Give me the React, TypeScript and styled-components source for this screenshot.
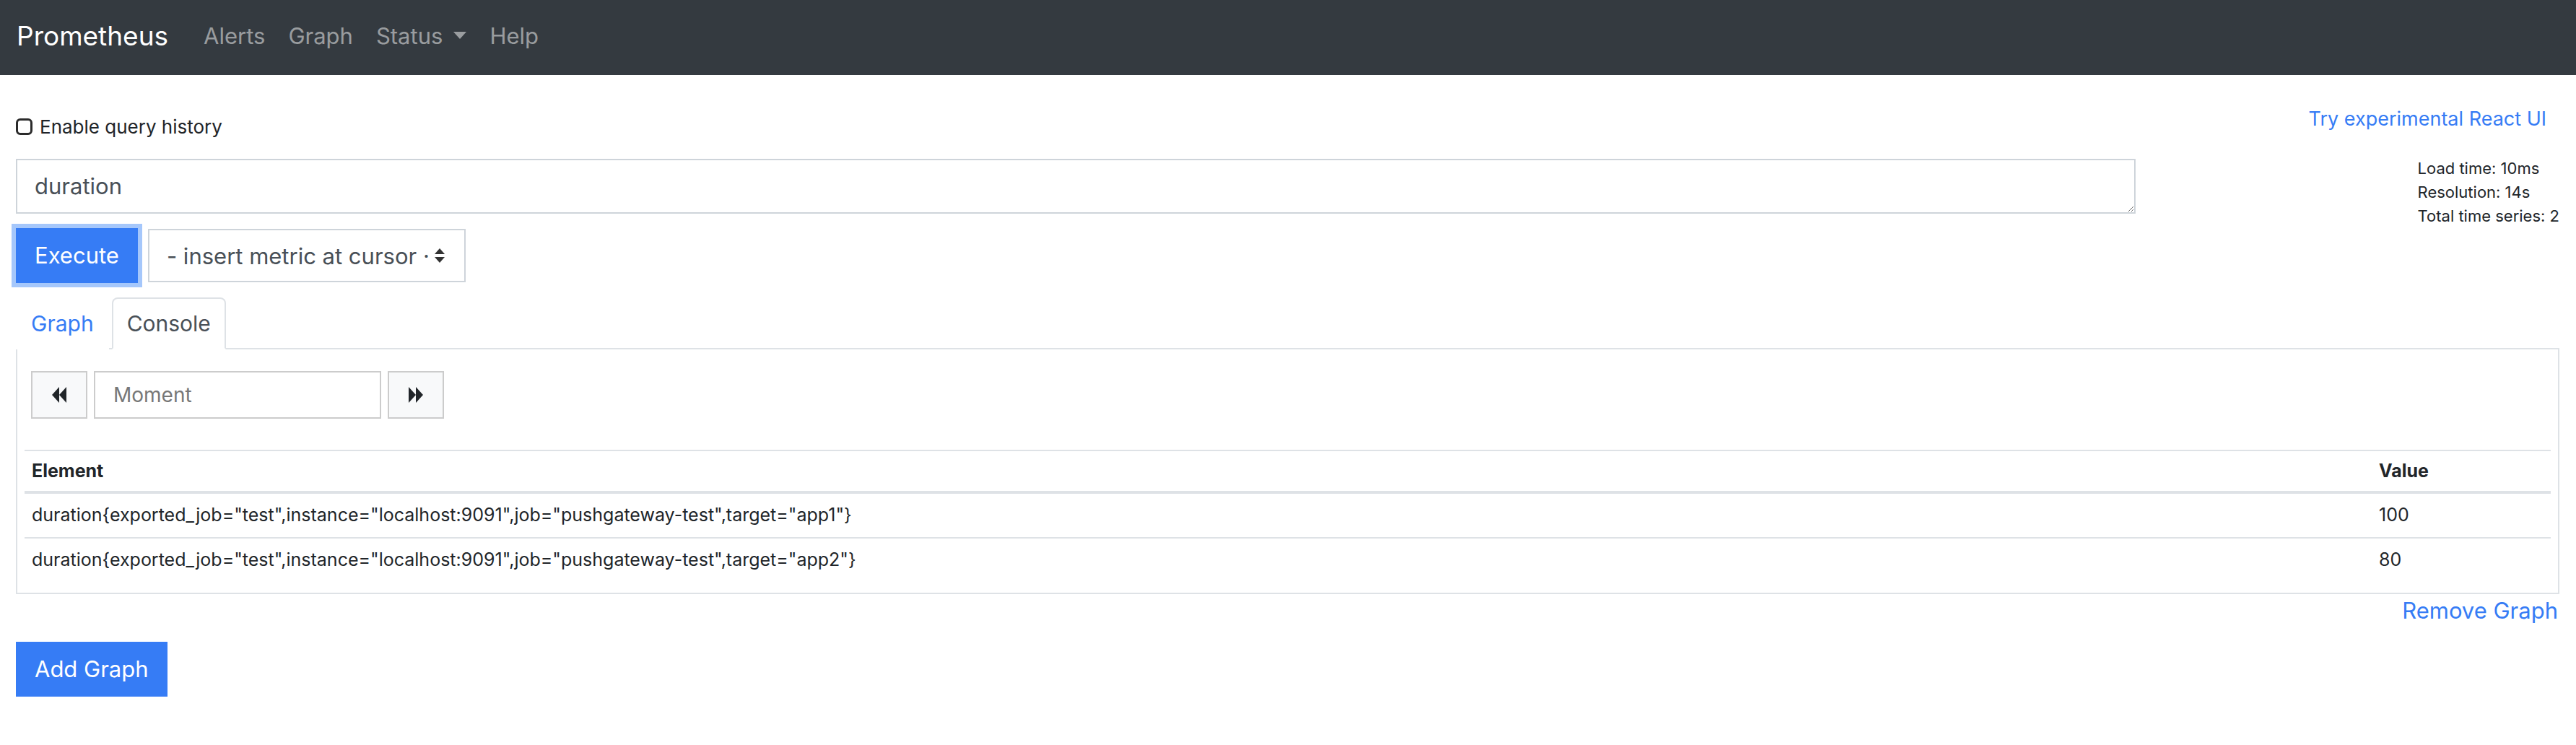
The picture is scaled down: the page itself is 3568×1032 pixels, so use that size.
import React from 'react';
import styled, { createGlobalStyle } from 'styled-components';

const BLUE = '#367cf5';

const GlobalStyle = createGlobalStyle`
  * { box-sizing: border-box; }
  body {
    margin: 0;
    background: #fff;
    font-family: Inter, "Liberation Sans", sans-serif;
    color: #212529;
  }
`;

const Navbar = styled.nav`
  height: 104px;
  background: #343a40;
  display: flex;
  align-items: center;
  padding: 0 32px 6px 23px;
`;

const Brand = styled.a`
  font-size: 37px;
  color: #fff;
  margin-right: 33px;
  text-decoration: none;
`;

const NavLink = styled.a`
  display: flex;
  align-items: center;
  padding: 0 16px;
  font-size: 31px;
  color: rgba(255, 255, 255, 0.5);
  text-decoration: none;
`;

const Caret = styled.span`
  display: inline-block;
  margin-left: 15px;
  border-top: 10px solid rgba(255, 255, 255, 0.5);
  border-left: 9px solid transparent;
  border-right: 9px solid transparent;
`;

const Page = styled.div`
  padding: 0 23px 40px 22px;
`;

const TopRow = styled.div`
  display: flex;
  justify-content: space-between;
  align-items: flex-start;
  padding-top: 41px;
`;

const HistoryLabel = styled.label`
  display: flex;
  align-items: center;
  gap: 10px;
  margin-top: 11px;
  font-size: 26px;
  line-height: 39px;
`;

const CheckBox = styled.span`
  width: 23px;
  height: 23px;
  border: 3px solid #2b2b2b;
  border-radius: 6px;
`;

const TextLink = styled.a`
  font-size: ${p => p.$size || 31}px;
  line-height: ${p => (p.$size || 31) * 1.5}px;
  color: ${BLUE};
  text-decoration: none;
`;

const QueryGrid = styled.div`
  display: grid;
  grid-template-columns: 10fr 2fr;
  margin-top: 25px;
`;

const QueryInput = styled.textarea`
  display: block;
  width: 100%;
  height: 76px;
  padding: 12px 24px;
  border: 2px solid #ced4da;
  border-radius: 0;
  font-family: Inter, "Liberation Sans", sans-serif;
  font-size: 31px;
  line-height: 48px;
  color: #495057;
  resize: vertical;
  outline: none;
`;

const ExecuteRow = styled.div`
  display: flex;
  align-items: center;
  gap: 14px;
  margin-top: 20px;
`;

const Button = styled.button`
  height: 76px;
  padding: 0 24px;
  background: ${BLUE};
  border: 2px solid ${BLUE};
  border-radius: 0;
  color: #fff;
  font-family: Inter, "Liberation Sans", sans-serif;
  font-size: 31px;
  line-height: 48px;
  box-shadow: ${p => (p.$focused ? '0 0 0 6px #a5c7fb' : 'none')};
`;

const MetricSelect = styled.div`
  width: 440px;
  height: 74px;
  display: flex;
  align-items: center;
  justify-content: space-between;
  padding: 0 27px 0 24px;
  border: 2px solid #ced4da;
  font-size: 31px;
  color: #495057;
  white-space: nowrap;
`;

const Stats = styled.div`
  justify-self: end;
  margin-top: -3px;
  font-size: 22px;
  line-height: 33px;
`;

const TabList = styled.div`
  display: flex;
  gap: 4px;
  margin-top: 20px;
  margin-bottom: -2px;
  position: relative;
`;

const Tab = styled.a`
  padding: 10px 19px;
  font-size: 30px;
  line-height: 48px;
  text-decoration: none;
  border: 2px solid ${p => (p.$active ? '#dee2e6' : 'transparent')};
  border-bottom-color: ${p => (p.$active ? '#fff' : 'transparent')};
  border-radius: 8px 8px 0 0;
  background: #fff;
  color: ${p => (p.$active ? '#495057' : BLUE)};
`;

const Panel = styled.div`
  border: 2px solid #dee2e6;
  padding: 10px;
`;

const MomentRow = styled.div`
  display: flex;
  gap: 9px;
  margin: 20px 0 0 9px;
`;

const StepButton = styled.div`
  width: 78px;
  height: 66px;
  display: flex;
  align-items: center;
  justify-content: center;
  background: #f8f9fa;
  border: 2px solid #ccc;
`;

const MomentInput = styled.input`
  width: 398px;
  height: 66px;
  padding: 0 25px;
  border: 2px solid #ccc;
  font-family: Inter, "Liberation Sans", sans-serif;
  font-size: 28px;
  color: #495057;
  outline: none;
  &::placeholder { color: #777; }
`;

const Table = styled.table`
  width: 100%;
  margin: 43px 0 5px;
  border-collapse: collapse;
  font-size: 25px;
  line-height: 39px;
`;

const Th = styled.th`
  text-align: left;
  font-weight: 700;
  padding: 8px 10px;
  border-top: 2px solid #dee2e6;
  border-bottom: 4px solid #dee2e6;
  width: ${p => p.$width || 'auto'};
`;

const Td = styled.td`
  padding: 10px 10px 11px;
  border-top: 2px solid #dee2e6;
`;

const RemoveRow = styled.div`
  display: flex;
  justify-content: flex-end;
  padding-right: 2px;
`;

const AddRow = styled.div`
  margin-top: 19px;
`;

const Rewind = () => (
  <svg width="20" height="22" viewBox="0 0 20 22">
    <polygon points="10,0 0,11 10,22" fill="#212529" />
    <polygon points="20,0 10,11 20,22" fill="#212529" />
  </svg>
);

const Forward = () => (
  <svg width="20" height="22" viewBox="0 0 20 22">
    <polygon points="0,0 10,11 0,22" fill="#212529" />
    <polygon points="10,0 20,11 10,22" fill="#212529" />
  </svg>
);

const UpDown = () => (
  <svg width="14" height="20" viewBox="0 0 14 20">
    <polygon points="7,0 14,8 0,8" fill="#333" />
    <polygon points="0,12 14,12 7,20" fill="#333" />
  </svg>
);

const rows = [
  { metric: 'duration{exported_job="test",instance="localhost:9091",job="pushgateway-test",target="app1"}', value: '100' },
  { metric: 'duration{exported_job="test",instance="localhost:9091",job="pushgateway-test",target="app2"}', value: '80' },
];

export default function App() {
  return (
    <>
      <GlobalStyle />
      <Navbar>
        <Brand href="#">Prometheus</Brand>
        <NavLink href="#">Alerts</NavLink>
        <NavLink href="#">Graph</NavLink>
        <NavLink href="#">Status<Caret /></NavLink>
        <NavLink href="#">Help</NavLink>
      </Navbar>
      <Page>
        <TopRow>
          <HistoryLabel><CheckBox />Enable query history</HistoryLabel>
          <TextLink href="#" $size={27} style={{ marginRight: 18 }}>Try experimental React UI</TextLink>
        </TopRow>
        <QueryGrid>
          <div>
            <QueryInput rows={1} defaultValue="duration" spellCheck={false} />
            <ExecuteRow>
              <Button $focused>Execute</Button>
              <MetricSelect>
                <span>- insert metric at cursor ·</span>
                <UpDown />
              </MetricSelect>
            </ExecuteRow>
          </div>
          <Stats>
            <div>Load time: 10ms</div>
            <div>Resolution: 14s</div>
            <div>Total time series: 2</div>
          </Stats>
        </QueryGrid>
        <TabList>
          <Tab href="#">Graph</Tab>
          <Tab href="#" $active>Console</Tab>
        </TabList>
        <Panel>
          <MomentRow>
            <StepButton><Rewind /></StepButton>
            <MomentInput placeholder="Moment" />
            <StepButton><Forward /></StepButton>
          </MomentRow>
          <Table>
            <thead>
              <tr>
                <Th>Element</Th>
                <Th $width="248px">Value</Th>
              </tr>
            </thead>
            <tbody>
              {rows.map(r => (
                <tr key={r.value}>
                  <Td>{r.metric}</Td>
                  <Td>{r.value}</Td>
                </tr>
              ))}
            </tbody>
          </Table>
        </Panel>
        <RemoveRow><TextLink href="#">Remove Graph</TextLink></RemoveRow>
        <AddRow><Button>Add Graph</Button></AddRow>
      </Page>
    </>
  );
}
